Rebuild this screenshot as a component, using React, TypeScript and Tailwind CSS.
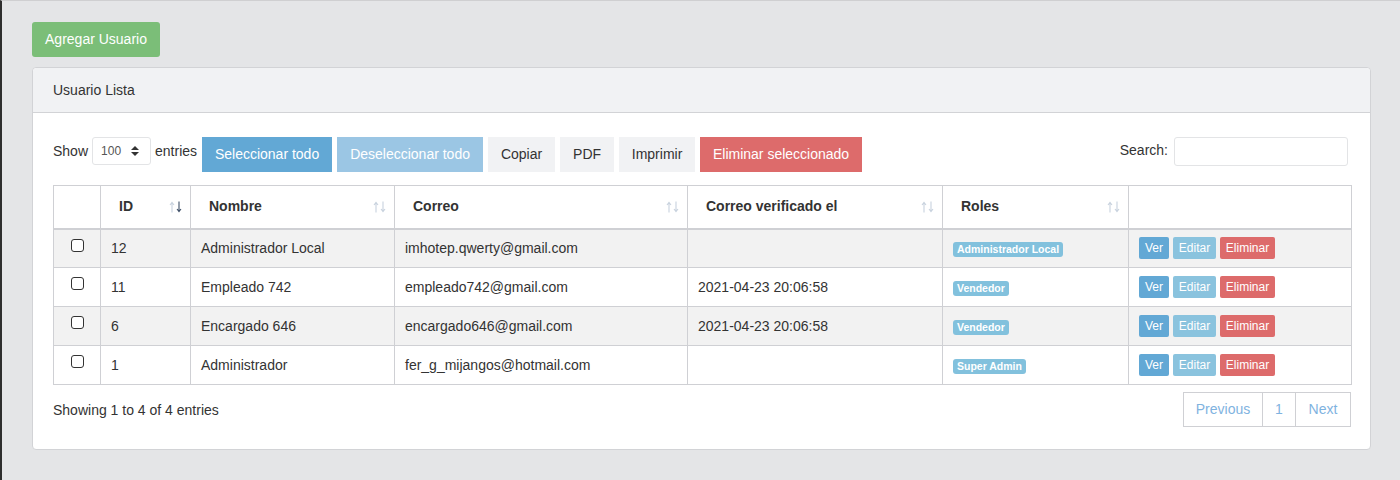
import React from "react";

const rows = [
  { id: "12", name: "Administrador Local", email: "imhotep.qwerty@gmail.com", verified: "", role: "Administrador Local" },
  { id: "11", name: "Empleado 742", email: "empleado742@gmail.com", verified: "2021-04-23 20:06:58", role: "Vendedor" },
  { id: "6", name: "Encargado 646", email: "encargado646@gmail.com", verified: "2021-04-23 20:06:58", role: "Vendedor" },
  { id: "1", name: "Administrador", email: "fer_g_mijangos@hotmail.com", verified: "", role: "Super Admin" },
];

function SortIcon({ active }: { active?: boolean }) {
  const light = "#c8d2de";
  const down = active ? "#3f5068" : light;
  return (
    <svg className="absolute right-[8px] top-[15px]" width="13" height="12" viewBox="0 0 13 12" fill="none">
      <path d="M3 11.5 V1.5 M1 4 L3 1.5 L5 4" stroke={light} strokeWidth="1.1" />
      <path d="M10 0.5 V10.5 M8 8 L10 10.5 L12 8" stroke={down} strokeWidth="1.1" />
    </svg>
  );
}

export default function App() {
  const th = "relative h-[43px] border-r border-[#cfd0d4] pl-[18px] text-left align-middle text-[14px] font-bold text-[#333]";
  const td = "h-[39px] border-r border-t border-[#cfd0d4] pl-[10px] align-middle text-[14px] text-[#333]";
  const tdc = "h-[39px] border-r border-t border-[#cfd0d4] text-center align-middle";
  return (
    <div
      className="min-h-[480px] w-[1400px] border-l-2 border-t border-l-[#2e2e2e] border-t-[#cfcfd1] bg-[#e4e5e7] pl-[30px] pt-[21px]"
      style={{ fontFamily: '"Liberation Sans", Arial, sans-serif' }}
    >
      <button className="h-[35px] w-[128px] rounded-[3px] bg-[#7bbe78] text-[14px] text-white">Agregar Usuario</button>
      <div className="mt-[10px] w-[1339px] rounded-[4px] border border-[#d2d3d6] bg-white">
        <div className="flex h-[45px] items-center rounded-t-[4px] border-b border-[#d2d3d6] bg-[#f1f2f4] pl-[20px] text-[14px] text-[#333]">
          Usuario Lista
        </div>
        <div className="px-[20px] pb-[22px] pt-[24px]">
          <div className="flex items-start">
            <div className="flex items-center text-[14px] text-[#333]">
              <span>Show</span>
              <div className="ml-[4px] mr-[4px] flex h-[28px] w-[59px] items-center rounded-[3px] border border-[#e3e4e6] pl-[8px] text-[12px] text-[#555]">
                100
                <svg className="ml-[10px]" width="8" height="12" viewBox="0 0 8 12">
                  <path d="M0 5 L4 1 L8 5 Z M0 7 L4 11 L8 7 Z" fill="#333" />
                </svg>
              </div>
              <span>entries</span>
            </div>
            <div className="ml-[5px] flex gap-[5px] text-[14px]">
              <button className="h-[35px] w-[130px] bg-[#62a8d5] text-white">Seleccionar todo</button>
              <button className="h-[35px] w-[146px] bg-[#9bc6e4] text-white">Deseleccionar todo</button>
              <button className="h-[35px] w-[67px] bg-[#f1f2f4] text-[#333]">Copiar</button>
              <button className="h-[35px] w-[54px] bg-[#f1f2f4] text-[#333]">PDF</button>
              <button className="h-[35px] w-[76px] bg-[#f1f2f4] text-[#333]">Imprimir</button>
              <button className="h-[35px] w-[162px] bg-[#dd6b6b] text-white">Eliminar seleccionado</button>
            </div>
            <div className="ml-auto mr-[2px] flex items-center text-[14px] text-[#333]">
              <span className="mt-[-2px]">Search:</span>
              <div className="ml-[6px] h-[29px] w-[174px] rounded-[3px] border border-[#e3e4e6]" />
            </div>
          </div>
          <table className="mt-[13px] w-[1298px] table-fixed border-collapse border border-[#cfd0d4]">
            <colgroup>
              <col className="w-[47px]" />
              <col className="w-[90px]" />
              <col className="w-[204px]" />
              <col className="w-[293px]" />
              <col className="w-[255px]" />
              <col className="w-[186px]" />
              <col className="w-[223px]" />
            </colgroup>
            <thead>
              <tr className="border-b-2 border-[#cfd0d4]">
                <th className={th}></th>
                <th className={th}>ID<SortIcon active /></th>
                <th className={th}>Nombre<SortIcon /></th>
                <th className={th}>Correo<SortIcon /></th>
                <th className={th}>Correo verificado el<SortIcon /></th>
                <th className={th}>Roles<SortIcon /></th>
                <th className={th}></th>
              </tr>
            </thead>
            <tbody>
              {rows.map((r, i) => (
                <tr key={r.id} className={i % 2 === 0 ? "bg-[#f2f2f2]" : "bg-white"}>
                  <td className={tdc}>
                    <span className="mt-[-8px] inline-block h-[13px] w-[13px] rounded-[3px] border-[1.5px] border-[#333] bg-white align-middle" />
                  </td>
                  <td className={td}>{r.id}</td>
                  <td className={td}>{r.name}</td>
                  <td className={td}>{r.email}</td>
                  <td className={td}>{r.verified}</td>
                  <td className={td}>
                    <span className="inline-block rounded-[3px] bg-[#82c1dd] px-[4px] py-[1px] text-[10.5px] font-bold leading-[13px] text-white">
                      {r.role}
                    </span>
                  </td>
                  <td className={td}>
                    <div className="flex gap-[4px] text-[12px] text-white">
                      <span className="flex h-[22px] w-[30px] items-center justify-center rounded-[2px] bg-[#62a8d5]">Ver</span>
                      <span className="flex h-[22px] w-[43px] items-center justify-center rounded-[2px] bg-[#8ac3de]">Editar</span>
                      <span className="flex h-[22px] w-[55px] items-center justify-center rounded-[2px] bg-[#dd6b6b]">Eliminar</span>
                    </div>
                  </td>
                </tr>
              ))}
            </tbody>
          </table>
          <div className="mt-[7px] flex items-start text-[14px]">
            <span className="mt-[8px] text-[#333]">Showing 1 to 4 of 4 entries</span>
            <div className="-mr-[1px] ml-auto flex h-[35px] border border-[#cfd0d4] text-[#7fb3df]">
              <span className="flex w-[79px] items-center justify-center border-r border-[#cfd0d4]">Previous</span>
              <span className="flex w-[33px] items-center justify-center border-r border-[#cfd0d4]">1</span>
              <span className="flex w-[54px] items-center justify-center">Next</span>
            </div>
          </div>
        </div>
      </div>
    </div>
  );
}
